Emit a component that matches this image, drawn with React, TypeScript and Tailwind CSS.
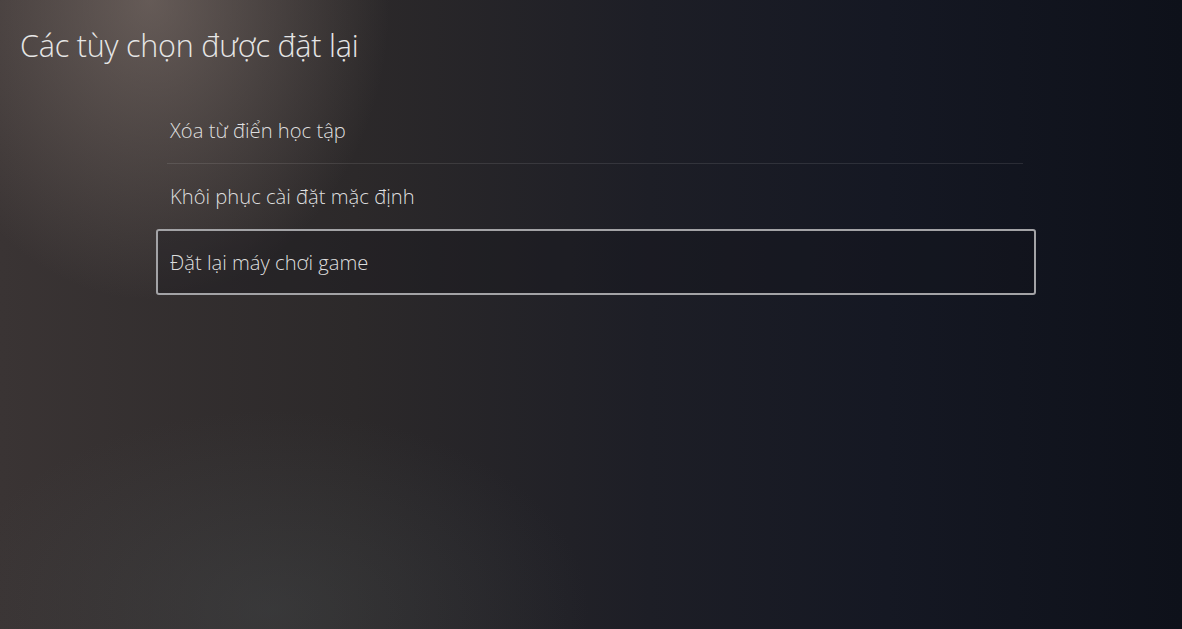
const items = [
  { label: "Xóa từ điển học tập", focused: false },
  { label: "Khôi phục cài đặt mặc định", focused: false },
  { label: "Đặt lại máy chơi game", focused: true },
];

export default function App() {
  return (
    <div
      className="h-[629px] w-[1182px] overflow-hidden font-['Open_Sans',sans-serif] text-[#e6e6e6] bg-[radial-gradient(ellipse_240px_300px_at_150px_0px,rgba(150,134,126,0.5),transparent),radial-gradient(ellipse_320px_200px_at_270px_610px,rgba(78,86,88,0.3),transparent),linear-gradient(90deg,#3a3434_0%,#2c292a_30%,#1d1e26_55%,#151823_75%,#0e111a_100%)]"
    >
      <h1 className="pl-[20px] pt-[24px] text-[30.5px] font-light leading-[42px] tracking-[-0.2px]">
        Các tùy chọn được đặt lại
      </h1>

      <div className="ml-[156px] mt-[31px] flex w-[880px] flex-col">
        {items.map((item, i) => (
          <div key={item.label} className="flex flex-col">
            <div
              className={
                item.focused
                  ? "flex h-[66px] items-center rounded-[3px] border-2 border-[#a3a3a6] bg-[#141419]/30 pl-[12px]"
                  : i === 1
                    ? "flex h-[65px] items-center pl-[14px]"
                    : "flex h-[66px] items-center pl-[14px]"
              }
            >
              <span className="text-[20.2px] font-light text-[#dedede]">{item.label}</span>
            </div>
            {i === 0 && <div className="ml-[11px] mr-[13px] h-px bg-white/10" />}
          </div>
        ))}
      </div>
    </div>
  );
}
